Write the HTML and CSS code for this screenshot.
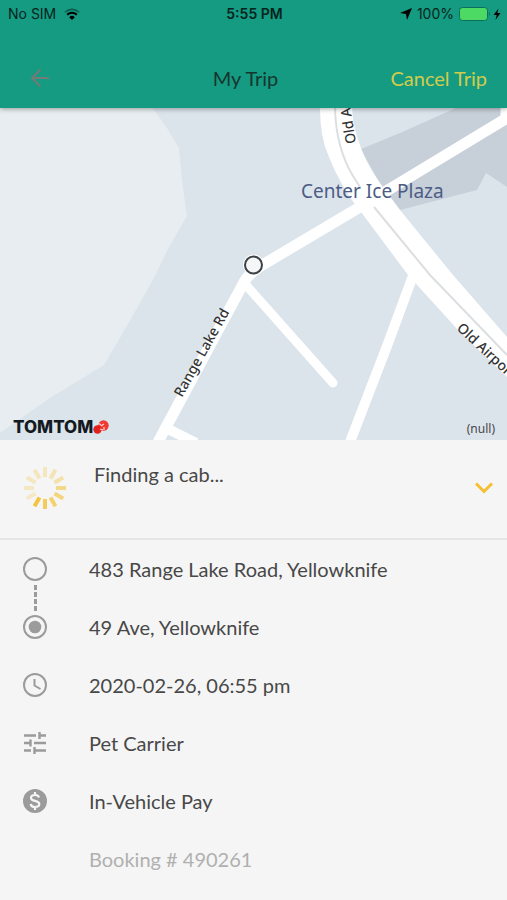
FILE: index.html
```html
<!DOCTYPE html>
<html lang="en">
<head>
  <meta charset="UTF-8" />
  <meta name="viewport" content="width=device-width, initial-scale=1" />
  <title>My Trip</title>
  <link rel="stylesheet" href="styles.css">
</head>
<body>

  <header class="header">
    <div class="status-bar">
      <div class="status-left">
        <span>No SIM</span>
        <svg width="16" height="12" viewBox="0 0 16 12">
          <path d="M1 4.2a10 10 0 0 1 14 0" fill="none" stroke="#0b5f50" stroke-width="1.6" />
          <path d="M3.2 6.8a6.8 6.8 0 0 1 9.6 0" fill="none" stroke="#000" stroke-width="2" />
          <path d="M8 12L5.2 9.2a4 4 0 0 1 5.6 0z" />
        </svg>
      </div>
      <strong class="status-time">5:55 PM</strong>
      <div class="status-right">
        <svg width="12" height="12" viewBox="0 0 12 12"><path d="M12 0L7 12L6 6L0 5z" /></svg>
        <span>100%</span>
        <svg width="42" height="14" viewBox="0 0 42 14">
          <rect x="0.5" y="0.5" width="28" height="13" rx="3" fill="#4cd964" stroke="#0b6f5e" />
          <path d="M30 5v4q2-2 0-4z" fill="#0b6f5e" />
          <path d="M39.500 1.500L34.500 8h3.200L36.500 13L41.500 6h-3.200z" />
        </svg>
      </div>
    </div>

    <nav class="nav">
      <button class="back" aria-label="Back">
        <svg width="24" height="24" viewBox="0 0 24 24" fill="none" stroke="#747a75" stroke-width="2">
          <path d="M21 12H4M12.500 3.500L4 12l8.500 8.500" />
        </svg>
      </button>
      <h1>My Trip</h1>
      <button class="cancel">Cancel Trip</button>
    </nav>
  </header>

  <main>
    <section class="map">
      <svg class="map-canvas" viewBox="0 0 507 332" preserveAspectRatio="xMidYMid slice">
        <!-- ground -->
        <rect width="507" height="332" fill="#dbe4eb" />
        <path d="M0 0H152L155 3L167 20L179 40L183 80L187 108L167 143L155 168L140 195L120 230L104 257L50 290L0 325z" fill="#e7edf0" />
        <path d="M361 41L400 25L456 0H507V79L486 65L477 82L400 102L380 76z" fill="#c7cfd9" />

        <!-- side streets -->
        <g fill="none" stroke="#fff" stroke-width="11" stroke-linejoin="round">
          <path d="M158 334L243 176Q248 165 264 156L360 99L507 10" />
          <path d="M504 14V-4" stroke-width="7" />
          <path d="M246 177L333 275" stroke-width="9" stroke-linecap="round" />
          <path d="M414 165L387 238L350 334" stroke-width="10" />
          <path d="M164 319L196 335" stroke-width="10" />
        </g>

        <!-- Old Airport Rd -->
        <path d="M320 0Q320 30 329 49Q340 78 361 104L408 167L458 222L507 269V229L453 167L400 102L380 75Q366 55 361 40Q353 20 352 0z" fill="#fff" />
        <path d="M335 0Q336 40 353 68L360 79M374 99L430 167L507 247" fill="none" stroke="#dcdfe2" stroke-width="2" />

        <g class="road-label">
          <text transform="translate(182 290) rotate(-61)">Range Lake Rd</text>
          <text transform="translate(456 221) rotate(43)">Old Airpor</text>
          <text transform="translate(356 35) rotate(-99)">Old A</text>
        </g>
        <text class="place-label" x="301" y="90">Center Ice Plaza</text>

        <circle cx="253.500" cy="157" r="8.500" fill="#f4f6f7" stroke="#fff" stroke-width="4" />
        <circle cx="253.500" cy="157" r="8.500" fill="#f4f6f7" stroke="#3c4246" stroke-width="2" />
      </svg>

      <div class="map-logo">
        <span>TOMTOM</span>
        <svg width="16" height="14" viewBox="0 0 16 14">
          <circle cx="10.500" cy="5.500" r="5.200" fill="#ee3a33" />
          <circle cx="4.500" cy="9.500" r="4.200" fill="#e3221c" />
          <path d="M5 3l3 2M8 6l3-2M7 9l3 1M11 7v3" stroke="#fbd3d0" stroke-width="1.200" />
        </svg>
      </div>
      <span class="map-credit">(null)</span>
    </section>

    <section class="finding">
      <svg class="spinner" width="44" height="44" viewBox="-22 -22 44 44" stroke="#f3c53f" stroke-width="4">
        <path d="M0-11V-21" opacity=".3" />
        <path d="M0-11V-21" opacity=".35" transform="rotate(30)" />
        <path d="M0-11V-21" opacity=".42" transform="rotate(60)" />
        <path d="M0-11V-21" opacity=".6" transform="rotate(90)" />
        <path d="M0-11V-21" opacity=".65" transform="rotate(120)" />
        <path d="M0-11V-21" opacity=".75" transform="rotate(150)" />
        <path d="M0-11V-21" opacity=".85" transform="rotate(180)" />
        <path d="M0-11V-21" transform="rotate(210)" />
        <path d="M0-11V-21" opacity=".25" transform="rotate(240)" />
        <path d="M0-11V-21" opacity=".28" transform="rotate(270)" />
        <path d="M0-11V-21" opacity=".3" transform="rotate(300)" />
        <path d="M0-11V-21" opacity=".3" transform="rotate(330)" />
      </svg>
      <p>Finding a cab...</p>
      <button class="toggle" aria-label="Hide details">
        <svg width="18" height="12" viewBox="0 0 18 12" fill="none" stroke="#f6bf2f" stroke-width="3">
          <path d="M1 1.500L9 9.500L17 1.500" />
        </svg>
      </button>
    </section>

    <ul class="details">
      <li class="pickup">
        <svg class="icon" viewBox="0 0 24 24"><circle cx="12" cy="12" r="11" fill="none" stroke="#9b9b9b" stroke-width="2" /></svg>
        <span>483 Range Lake Road, Yellowknife</span>
      </li>
      <li>
        <svg class="icon" viewBox="0 0 24 24">
          <circle cx="12" cy="12" r="11" fill="none" stroke="#9b9b9b" stroke-width="2" />
          <circle cx="12" cy="12" r="6.300" fill="#9b9b9b" />
        </svg>
        <span>49 Ave, Yellowknife</span>
      </li>
      <li>
        <svg class="icon" viewBox="0 0 24 24" fill="none" stroke="#9b9b9b" stroke-width="2">
          <circle cx="12" cy="12" r="11" />
          <path d="M11.500 6v6.500L17.500 16" />
        </svg>
        <span>2020-02-26, 06:55 pm</span>
      </li>
      <li>
        <svg class="icon" viewBox="0 0 24 24" fill="none" stroke="#9b9b9b" stroke-width="2.400">
          <path d="M1 4.500h12M16.500 1v7M16.500 4.500H23M1 12h7M7.500 8.500v7M11 12h12M1 19.500h7M11.500 16v7M11.500 19.500H23" />
        </svg>
        <span>Pet Carrier</span>
      </li>
      <li>
        <svg class="icon" viewBox="0 0 24 24" fill="none" stroke="#f5f5f5" stroke-width="2.200">
          <circle cx="12" cy="12" r="12" fill="#9b9b9b" stroke="none" />
          <path d="M16 8.500C15.500 6.600 14 6 12 6C9.600 6 8 7.100 8 8.900C8 13 16.300 10.800 16.300 15C16.300 17 14.500 18 12 18C9.600 18 8 17 7.600 15M12 3v3M12 18v3" />
        </svg>
        <span>In-Vehicle Pay</span>
      </li>
      <li class="booking">
        <span class="icon"></span>
        <span>Booking # 490261</span>
      </li>
    </ul>
  </main>

</body>
</html>
```
FILE: styles.css
```css
* {
  box-sizing: border-box;
}
body {
  margin: 0;
  font-family: Lato, sans-serif;
  font-size: 20px;
  line-height: 24px;
  color: #484848;
  background: #f5f5f5;
}
button {
  padding: 0;
  border: none;
  background: none;
  font: inherit;
  cursor: pointer;
}
svg {
  display: block;
}

/* header */
.header {
  position: relative;
  z-index: 1;
  background: #149b82;
  box-shadow: 0 1px 5px rgba(0,0,0,0.35);
}
.status-bar {
  display: grid;
  grid-template-columns: 1fr auto 1fr;
  align-items: center;
  height: 28px;
  padding: 0 6px 0 8px;
  font-family: Inter, sans-serif;
  font-size: 14px;
  color: #06231d;
}
.status-time {
  font-weight: 600;
}
.status-left,
.status-right {
  display: flex;
  align-items: center;
  gap: 8px;
}
.status-right {
  justify-content: flex-end;
  gap: 5px;
}
.nav {
  display: grid;
  grid-template-columns: 1fr auto 1fr;
  align-items: center;
  height: 80px;
  padding: 20px 20px 0 4px;
}
.nav h1 {
  margin: 0;
  font-size: 20px;
  font-weight: normal;
  color: #16352f;
}
.back {
  justify-self: start;
  padding: 0 24px;
}
.cancel {
  justify-self: end;
  color: #d3cc4b;
}

/* map */
.map {
  position: relative;
}
.map-canvas {
  width: 100%;
  height: 332px;
}
.road-label {
  font-family: "Noto Sans", sans-serif;
  font-size: 14px;
  font-weight: 500;
  fill: #333;
}
.place-label {
  font-family: "Noto Sans", sans-serif;
  font-size: 19px;
  fill: #4c5c85;
}
.map-logo {
  position: absolute;
  left: 13px;
  bottom: 5px;
  display: flex;
  align-items: center;
  font-family: Inter, sans-serif;
  font-size: 17px;
  font-weight: 800;
  line-height: 16px;
  color: #141a22;
}
.map-credit {
  position: absolute;
  right: 12px;
  bottom: 3px;
  font-family: "Noto Sans", sans-serif;
  font-size: 12px;
  line-height: 16px;
}

/* trip state */
.finding {
  display: flex;
  align-items: center;
  height: 100px;
  padding: 0 14px 2px 23px;
  border-bottom: 2px solid #e5e5e5;
}
.finding p {
  flex: 1;
  align-self: flex-start;
  margin: 22px 0 0 27px;
}

/* trip details */
.details {
  margin: 0;
  padding: 0 23px;
  list-style: none;
}
.details li {
  display: flex;
  align-items: center;
  gap: 42px;
  min-height: 58px;
}
.icon {
  flex: none;
  width: 24px;
  height: 24px;
}
.pickup {
  position: relative;
}
.pickup::after {
  content: "";
  position: absolute;
  top: 45px;
  left: 11px;
  width: 3px;
  height: 27px;
  background: repeating-linear-gradient(#9b9b9b 0 5px, transparent 5px 7px);
}
.booking {
  color: #b0b0b0;
}
```
